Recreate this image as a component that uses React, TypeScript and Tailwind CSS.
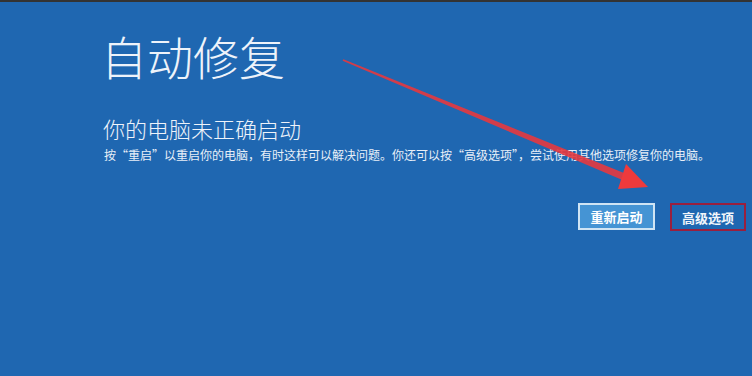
import React from "react";

const cjk = { fontFamily: '"Noto Sans CJK SC", "Noto Sans", sans-serif' };

export default function App() {
  return (
    <div className="relative w-[752px] h-[376px] overflow-hidden bg-[#1f67b1]" style={cjk}>
      <div className="h-[2px] bg-[#333333]" />
      <div className="flex flex-col">
        <div className="pl-[101px] flex flex-col">
          <h1 className="mt-[30px] text-[46px] leading-none font-light text-[#eef3fa]">自动修复</h1>
          <h2 className="mt-[39px] pl-[2px] text-[22px] leading-none font-light text-[#eef3fa]">你的电脑未正确启动</h2>
          <p className="mt-[10px] pl-[3px] text-[12px] leading-none text-[#e8eff8]">
            按“重启”以重启你的电脑，有时这样可以解决问题。你还可以按“高级选项”，尝试使用其他选项修复你的电脑。
          </p>
        </div>
        <div className="mt-[42px] flex justify-end gap-[15px] pr-[6px]">
          <button className="w-[77px] h-[27px] border-2 border-[#cfe4f4] bg-[#4594d4] text-[13px] font-bold text-white leading-none">
            重新启动
          </button>
          <button className="w-[76px] h-[28px] border-2 border-[#9a1f3e] bg-[#1f67b1] text-[13px] font-bold text-[#f2f6fb] leading-none">
            高级选项
          </button>
        </div>
      </div>
      <svg className="absolute inset-0 pointer-events-none" width="752" height="376" viewBox="0 0 752 376">
        <polygon
          points="343.4,59.2 342.6,60.8 622.4,180.0 625.2,173.6"
          fill="#e6383f"
          opacity="0.9"
        />
        <polygon points="648,187 626,164 618,189" fill="#ee3a3c" />
      </svg>
    </div>
  );
}
